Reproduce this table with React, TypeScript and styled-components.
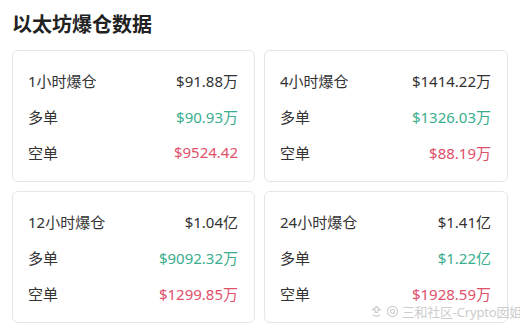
import React from 'react'
import styled, { createGlobalStyle } from 'styled-components'

const GlobalStyle = createGlobalStyle`
  html, body {
    margin: 0;
    padding: 0;
    background: #fff;
  }
  body {
    font-family: "Noto Sans", "Noto Sans CJK SC", sans-serif;
    color: #333;
  }
`

interface Stat {
  period: string
  total: string
  long: string
  short: string
}

const stats: Stat[] = [
  { period: '1小时爆仓', total: '$91.88万', long: '$90.93万', short: '$9524.42' },
  { period: '4小时爆仓', total: '$1414.22万', long: '$1326.03万', short: '$88.19万' },
  { period: '12小时爆仓', total: '$1.04亿', long: '$9092.32万', short: '$1299.85万' },
  { period: '24小时爆仓', total: '$1.41亿', long: '$1.22亿', short: '$1928.59万' },
]

export default function App() {
  return (
    <>
      <GlobalStyle />
      <Page>
        <Title>以太坊爆仓数据</Title>
        <Grid>
          {stats.map((s) => (
            <Card key={s.period}>
              <Row>
                <Label>{s.period}</Label>
                <Value>{s.total}</Value>
              </Row>
              <Row>
                <Label>多单</Label>
                <Value tone="long">{s.long}</Value>
              </Row>
              <Row>
                <Label>空单</Label>
                <Value tone="short">{s.short}</Value>
              </Row>
            </Card>
          ))}
        </Grid>
        <Watermark>
          <svg width="13" height="13" viewBox="0 0 14 14" fill="none" stroke="#cfcfcf" strokeWidth="1.3">
            <path d="M7 1.5 L11 5 L8.5 5 L8.5 8 L5.5 8 L5.5 5 L3 5 Z" />
            <path d="M3 10.5 Q7 13.5 11 10.5" />
          </svg>
          <svg width="13" height="13" viewBox="0 0 14 14" fill="none" stroke="#cfcfcf" strokeWidth="1.3">
            <circle cx="7" cy="7" r="5.5" />
            <circle cx="7" cy="7" r="2.2" />
          </svg>
          <span>三和社区-Crypto囡姐</span>
        </Watermark>
      </Page>
    </>
  )
}

const Page = styled.div`
  position: relative;
  width: 520px;
  height: 334px;
  padding: 10px 12px 0;
  box-sizing: border-box;
  overflow: hidden;
`
const Title = styled.h1`
  margin: 0 0 11px;
  font-size: 20px;
  line-height: 29px;
  font-weight: 700;
  color: #222;
`
const Grid = styled.div`
  display: grid;
  grid-template-columns: 243px 244px;
  column-gap: 9px;
  row-gap: 9px;
`
const Card = styled.div`
  border: 1px solid #e6e6e6;
  border-radius: 6px;
  padding: 11px 16px 11px 15px;
  height: 132px;
  box-sizing: border-box;
  display: flex;
  flex-direction: column;
`
const Row = styled.div`
  display: flex;
  justify-content: space-between;
  align-items: center;
  height: 36.5px;
`
const Label = styled.span`
  font-size: 15px;
  color: #333;
`
const Value = styled.span<{ tone?: 'long' | 'short' }>`
  font-size: 15px;
  color: ${(p) => (p.tone === 'long' ? '#3aae8e' : p.tone === 'short' ? '#e0506a' : '#333')};
`
const Watermark = styled.div`
  position: absolute;
  right: -2px;
  bottom: 13px;
  display: flex;
  align-items: center;
  gap: 3px;
  font-size: 13px;
  color: #cdcdcd;
  letter-spacing: -0.2px;
  white-space: nowrap;
`
